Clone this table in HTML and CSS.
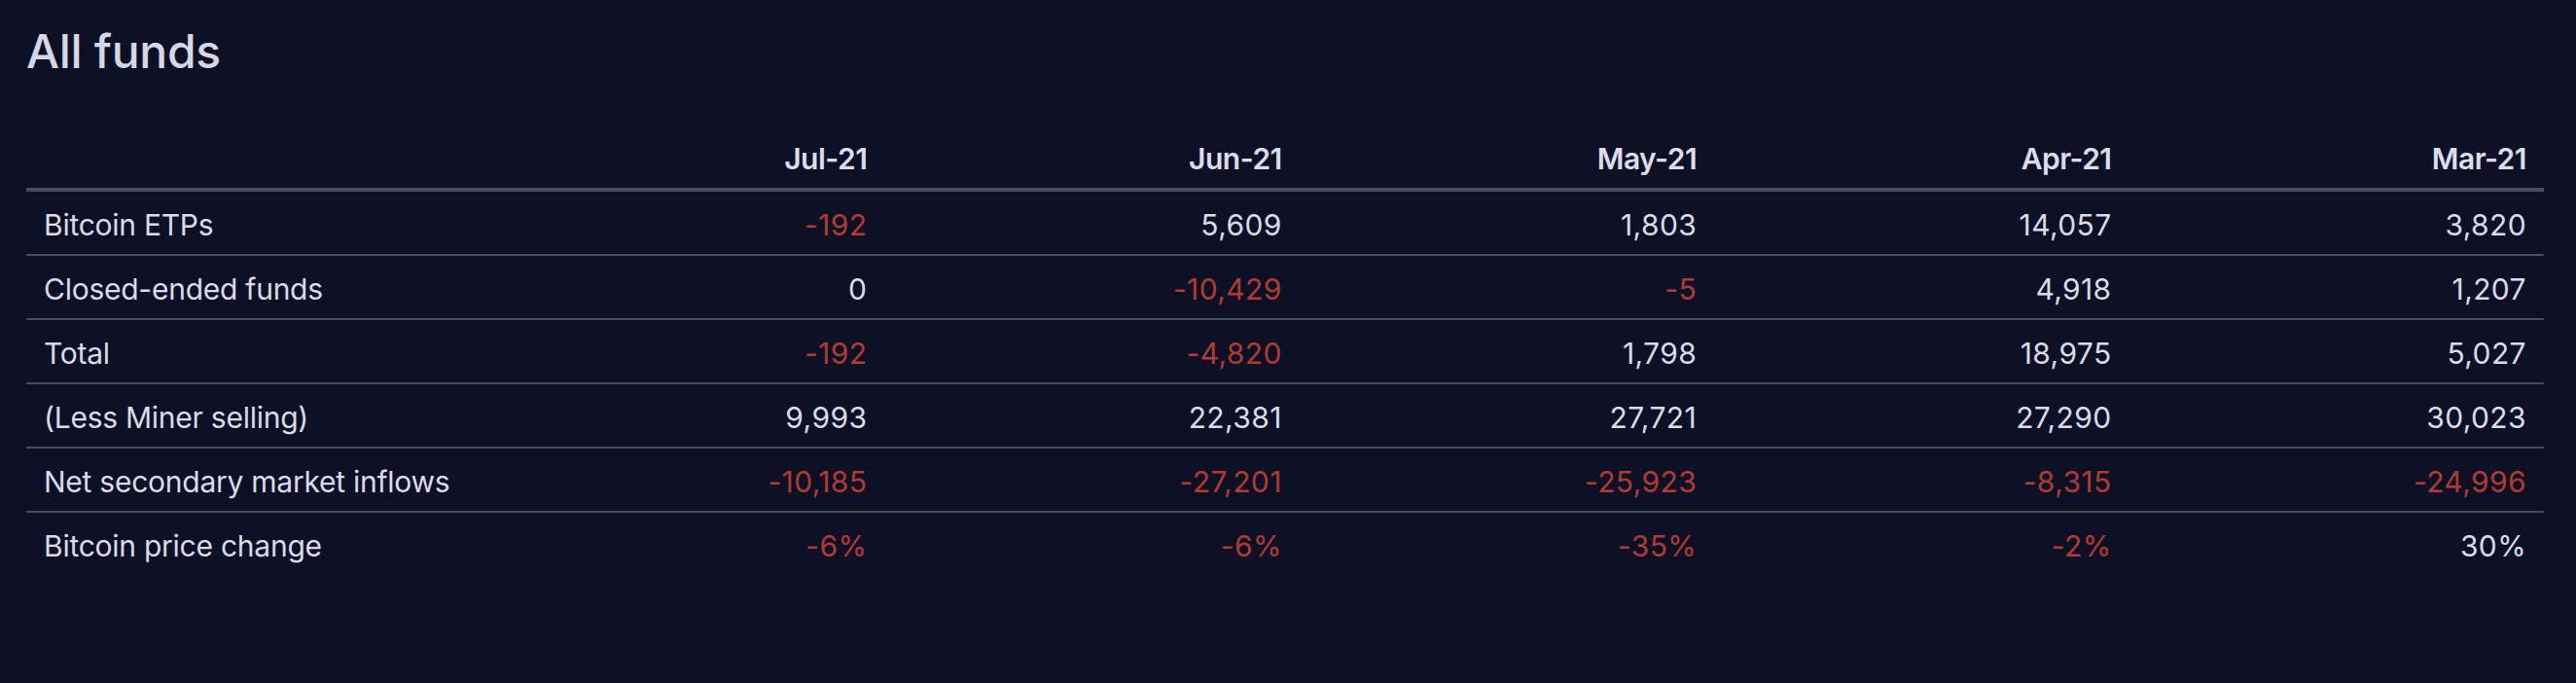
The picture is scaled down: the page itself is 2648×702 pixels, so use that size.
FILE: index.html
```
<!DOCTYPE html>
<html lang="en">
<head>
<meta charset="utf-8">
<title>All funds</title>
<link rel="stylesheet" href="styles.css">
</head>
<body>
<main class="page">
  <h1 class="title">All funds</h1>
  <table class="funds">
    <colgroup>
      <col class="col-label">
      <col><col><col><col><col>
    </colgroup>
    <thead>
      <tr>
        <th class="label"></th>
        <th>Jul-21</th>
        <th>Jun-21</th>
        <th>May-21</th>
        <th>Apr-21</th>
        <th>Mar-21</th>
      </tr>
    </thead>
    <tbody>
      <tr>
        <td class="label">Bitcoin ETPs</td>
        <td class="neg">-192</td>
        <td>5,609</td>
        <td>1,803</td>
        <td>14,057</td>
        <td>3,820</td>
      </tr>
      <tr>
        <td class="label">Closed-ended funds</td>
        <td>0</td>
        <td class="neg">-10,429</td>
        <td class="neg">-5</td>
        <td>4,918</td>
        <td>1,207</td>
      </tr>
      <tr>
        <td class="label">Total</td>
        <td class="neg">-192</td>
        <td class="neg">-4,820</td>
        <td>1,798</td>
        <td>18,975</td>
        <td>5,027</td>
      </tr>
      <tr>
        <td class="label">(Less Miner selling)</td>
        <td>9,993</td>
        <td>22,381</td>
        <td>27,721</td>
        <td>27,290</td>
        <td>30,023</td>
      </tr>
      <tr>
        <td class="label">Net secondary market inflows</td>
        <td class="neg">-10,185</td>
        <td class="neg">-27,201</td>
        <td class="neg">-25,923</td>
        <td class="neg">-8,315</td>
        <td class="neg">-24,996</td>
      </tr>
      <tr class="last">
        <td class="label">Bitcoin price change</td>
        <td class="neg">-6%</td>
        <td class="neg">-6%</td>
        <td class="neg">-35%</td>
        <td class="neg">-2%</td>
        <td>30%</td>
      </tr>
    </tbody>
  </table>
</main>
</body>
</html>
```

FILE: styles.css
```
html, body {
  margin: 0;
  padding: 0;
  background: #0e1126;
}

body {
  width: 2648px;
  height: 702px;
  overflow: hidden;
  font-family: Inter, "Noto Sans", "Liberation Sans", sans-serif;
  color: #dadbe6;
}

.page {
  padding: 29px 33px 0 27px;
}

.title {
  margin: 0;
  font-size: 48px;
  line-height: 48px;
  font-weight: 500;
  color: #d6d7e4;
  letter-spacing: -0.3px;
}

.funds {
  width: 2588px;
  margin-top: 52px;
  border-collapse: collapse;
  table-layout: fixed;
  font-size: 30px;
  line-height: 36px;
}

.col-label {
  width: 456px;
}

.funds th,
.funds td {
  padding: 16px 18px 12px 18px;
  text-align: right;
  white-space: nowrap;
}

.funds th {
  font-weight: 600;
  color: #dcdde8;
  letter-spacing: -0.5px;
  border-bottom: 4px solid #4b4c5a;
}

.funds td {
  font-weight: 400;
  letter-spacing: 0.4px;
  border-bottom: 2px solid #4a4b57;
}

.funds .last td {
  border-bottom: none;
}

.funds td.label {
  text-align: left;
  letter-spacing: -0.25px;
}

.funds td.neg {
  color: #b13b32;
}
```
